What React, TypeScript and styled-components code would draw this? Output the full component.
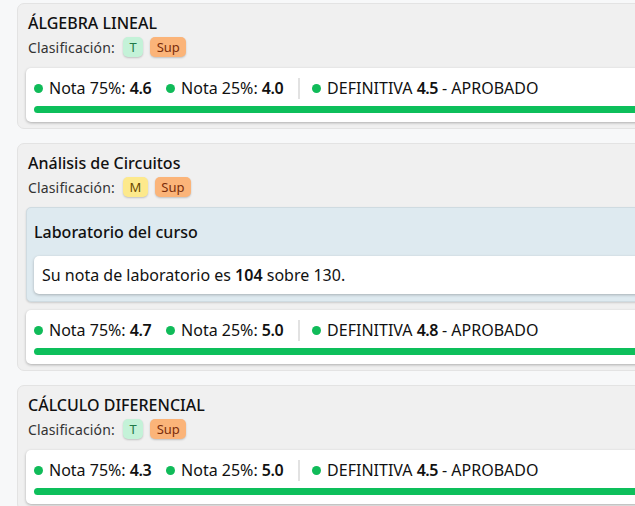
import React from "react";
import styled, { createGlobalStyle } from "styled-components";

const Global = createGlobalStyle`
  html, body { margin: 0; padding: 0; overflow: hidden; background: #f7f8f9; }
  body { font-family: "Noto Sans", "Open Sans", sans-serif; color: #1a1a1a; }
`;

const Page = styled.div`
  display: flex;
  flex-direction: column;
  gap: 14px;
  padding: 3px 0 0 17px;
  width: 680px;
`;

const Card = styled.section`
  background: #f0f0f0;
  border: 1px solid #e3e3e3;
  border-radius: 7px;
  padding: 9px 8px 6px 8px;
  display: flex;
  flex-direction: column;
`;

const Title = styled.h2`
  margin: 0 0 0 2px;
  font-size: 16px;
  font-weight: 500;
  line-height: 21px;
  color: #111;
`;

const ClassRow = styled.div`
  display: flex;
  align-items: center;
  gap: 7px;
  margin: 2px 0 0 2px;
  font-size: 14px;
  color: #333;
  height: 22px;
  & > span:first-child { margin-right: 1px; letter-spacing: 0.15px; }
`;

const tones = {
  T: { bg: "#c4f2d8", fg: "#1f7a47" },
  M: { bg: "#fde98c", fg: "#6b4a00" },
  Sup: { bg: "#fbb479", fg: "#7a2d0a" },
} as const;

const Badge = styled.span<{ $tone: keyof typeof tones }>`
  display: inline-flex;
  align-items: center;
  justify-content: center;
  height: 20px;
  padding: 0 6.5px;
  border-radius: 5px;
  font-size: 13px;
  background: ${(p) => tones[p.$tone].bg};
  color: ${(p) => tones[p.$tone].fg};
  box-shadow: 0 1px 2px rgba(0, 0, 0, 0.2);
`;

const GradeBox = styled.div<{ $afterLab?: boolean }>`
  margin-top: ${(p) => (p.$afterLab ? 8 : 10)}px;
  background: #fff;
  border-radius: 5px;
  box-shadow: 0 1px 3px rgba(0, 0, 0, 0.28);
  padding: 8px 0 9px 8px;
  display: flex;
  flex-direction: column;
  gap: 6px;
`;

const GradeRow = styled.div`
  display: flex;
  align-items: center;
  height: 24px;
  font-size: 16px;
  color: #111;
`;

const Item = styled.span`
  display: inline-flex;
  align-items: center;
  gap: 6px;
  margin-right: 15px;
  white-space: nowrap;
  flex-shrink: 0;
  & b { font-weight: 600; letter-spacing: -0.5px; }
`;

const Dot = styled.span`
  flex: 0 0 9px;
  width: 9px;
  height: 9px;
  border-radius: 50%;
  background: #10bb59;
`;

const Divider = styled.span`
  flex: 0 0 2px;
  height: 21px;
  background: #e2e2e2;
  margin: 0 12px 0 0;
`;

const Bar = styled.div`
  height: 7px;
  border-radius: 4px 0 0 4px;
  background: #0dbf5b;
`;

const Lab = styled.div`
  margin-top: 9px;
  background: #deeaf0;
  border: 1px solid #cfdbe1;
  border-radius: 5px;
  padding: 13px 0 7px 7px;
  display: flex;
  flex-direction: column;
  gap: 13px;
  box-shadow: 0 1px 2px rgba(0, 0, 0, 0.15);
`;

const LabTitle = styled.div`
  font-size: 16px;
  font-weight: 500;
  line-height: 22px;
  color: #111;
`;

const LabNote = styled.div`
  background: #fff;
  border-radius: 5px;
  box-shadow: 0 1px 3px rgba(0, 0, 0, 0.25);
  height: 38px;
  display: flex;
  align-items: center;
  padding-left: 8px;
  font-size: 16px;
  color: #111;
  & b { font-weight: 600; }
`;

const Stack = styled.div`
  display: flex;
  flex-direction: column;
`;

type Course = {
  name: string;
  level: "T" | "M";
  n75: string;
  n25: string;
  def: string;
  lab?: { got: string; total: string };
};

const courses: Course[] = [
  { name: "ÁLGEBRA LINEAL", level: "T", n75: "4.6", n25: "4.0", def: "4.5" },
  {
    name: "Análisis de Circuitos",
    level: "M",
    n75: "4.7",
    n25: "5.0",
    def: "4.8",
    lab: { got: "104", total: "130" },
  },
  { name: "CÁLCULO DIFERENCIAL", level: "T", n75: "4.3", n25: "5.0", def: "4.5" },
];

export default function App() {
  return (
    <>
      <Global />
      <Page>
        {courses.map((c) => (
          <Card key={c.name}>
            <Title>{c.name}</Title>
            <ClassRow>
              <span>Clasificación:</span>
              <Badge $tone={c.level}>{c.level}</Badge>
              <Badge $tone="Sup">Sup</Badge>
            </ClassRow>
            <Stack>
              {c.lab && (
                <Lab>
                  <LabTitle>Laboratorio del curso</LabTitle>
                  <LabNote>
                    <span>
                      Su nota de laboratorio es <b>{c.lab.got}</b> sobre {c.lab.total}.
                    </span>
                  </LabNote>
                </Lab>
              )}
              <GradeBox $afterLab={!!c.lab}>
                <GradeRow>
                  <Item>
                    <Dot />
                    <span>
                      Nota 75%: <b>{c.n75}</b>
                    </span>
                  </Item>
                  <Item>
                    <Dot />
                    <span>
                      Nota 25%: <b>{c.n25}</b>
                    </span>
                  </Item>
                  <Divider />
                  <Item>
                    <Dot />
                    <span>
                      DEFINITIVA <b>{c.def}</b> - APROBADO
                    </span>
                  </Item>
                </GradeRow>
                <Bar />
              </GradeBox>
            </Stack>
          </Card>
        ))}
      </Page>
    </>
  );
}
